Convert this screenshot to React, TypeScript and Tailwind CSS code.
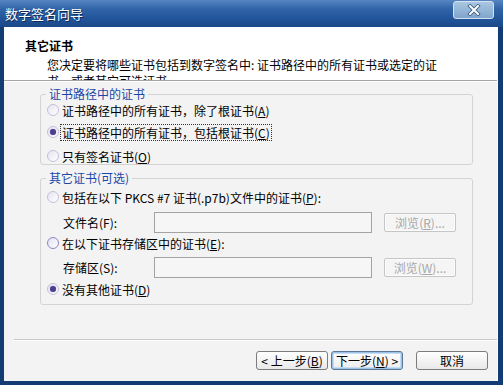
import React from "react";

function Radio({ checked, hover }: { checked?: boolean; hover?: boolean }) {
  return (
    <span
      className={
        hover
          ? "flex items-center justify-center w-[12px] h-[12px] rounded-full border border-[#9184c8] bg-[linear-gradient(135deg,#e3e0f2,#ffffff)] shrink-0"
          : "flex items-center justify-center w-[12px] h-[12px] rounded-full border border-[#c4c0dc] bg-[linear-gradient(135deg,#e6e4f0,#ffffff)] shrink-0"
      }
    >
      {checked && <span className="w-[6px] h-[6px] rounded-full bg-[#4d3f8e] shadow-[0_0_1px_#8a7fc0]" />}
    </span>
  );
}

function M({ c }: { c: string }) {
  return (
    <>
      (<span className="underline">{c}</span>)
    </>
  );
}

function RadioRow({
  children,
  checked,
  hover,
  focus,
  className,
}: {
  children: React.ReactNode;
  checked?: boolean;
  hover?: boolean;
  focus?: boolean;
  className?: string;
}) {
  return (
    <div className={"flex items-center h-[16px] pl-[6px] " + (className ?? "")}>
      <Radio checked={checked} hover={hover} />
      <span
        className={
          focus
            ? "ml-[2px] px-[1px] leading-[15px] outline outline-1 outline-dotted outline-[#333]"
            : "ml-[3px] leading-[15px]"
        }
      >
        {children}
      </span>
    </div>
  );
}

function Browse({ k }: { k: string }) {
  return (
    <div className="ml-[12px] w-[72px] h-[19px] rounded-[2px] border border-[#c6c6c6] bg-[#f5f5f5] flex items-center justify-center text-[#a8a8a8] shadow-[inset_0_0_0_1px_#fbfbfb]">
      浏览<M c={k} />...
    </div>
  );
}

function Btn({ children, def }: { children: React.ReactNode; def?: boolean }) {
  return (
    <div
      className={
        def
          ? "w-[72px] h-[19px] rounded-[3px] border border-[#5b7896] bg-[linear-gradient(#ffffff,#ececec)] shadow-[inset_0_0_0_1px_#9cc2e8,inset_0_0_0_2px_#c4dcf4] flex items-center justify-center text-black"
          : "w-[72px] h-[19px] rounded-[3px] border border-[#7c7c7c] bg-[linear-gradient(#ffffff,#e8e8e8)] flex items-center justify-center text-black"
      }
    >
      {children}
    </div>
  );
}

export default function App() {
  return (
    <div className="w-[503px] h-[385px] flex flex-col bg-[#133c74] font-['Noto_Sans_CJK_SC','Noto_Sans',sans-serif] text-[12px] text-black overflow-hidden">
      {/* Title bar */}
      <div className="h-[27px] shrink-0 flex items-start bg-[linear-gradient(#5685c2,#2f63a6_35%,#22549a_70%,#1a4888)]">
        <div className="mt-[6px] ml-[5px] text-[13px] leading-[16px] text-white [text-shadow:1px_1px_0_#0c2a55]">
          数字签名向导
        </div>
        <div className="ml-auto mr-[9px] mt-[1px] w-[41px] h-[18px] rounded-[3px] border border-[#d3e1f0] bg-[linear-gradient(#a9c6e2,#7fa5cc)] flex items-center justify-center">
          <svg width="14" height="12" viewBox="0 0 14 12">
            <path d="M3 2 L11 10 M11 2 L3 10" stroke="#35577f" strokeWidth="3.6" strokeLinecap="square" />
            <path d="M3 2 L11 10 M11 2 L3 10" stroke="#ffffff" strokeWidth="2" strokeLinecap="square" />
          </svg>
        </div>
      </div>

      {/* Client area */}
      <div className="flex-1 flex flex-col ml-[4px] mr-[5px] mb-[4px] bg-[#f3f3f3] border-r border-[#fbfbfb] min-h-0">
        {/* Header */}
        <div className="h-[53px] shrink-0 bg-white overflow-hidden pl-[21px] pt-[12px]">
          <div className="font-bold leading-[14px]">其它证书</div>
          <div className="mt-[4px] pl-[22px] leading-[16px]">
            您决定要将哪些证书包括到数字签名中: 证书路径中的所有证书或选定的证
            <br />
            书，或者其它可选证书。
          </div>
        </div>
        <div className="h-[1px] shrink-0 bg-[#a6a6a6]" />
        <div className="h-[1px] shrink-0 bg-white" />

        {/* Body */}
        <div className="flex-1 flex flex-col pt-[5px] pl-[36px]">
          <fieldset className="w-[433px] border border-[#d3d3d3] rounded-[3px] pb-[0px]">
            <legend className="ml-[5px] px-[3px] leading-[14px] text-[#1d46a6]">证书路径中的证书</legend>
            <RadioRow className="mt-[1px]">
              证书路径中的所有证书，除了根证书<M c="A" />
            </RadioRow>
            <RadioRow className="mt-[6px]" checked focus>
              证书路径中的所有证书，包括根证书<M c="C" />
            </RadioRow>
            <RadioRow className="mt-[8px]">
              只有签名证书<M c="O" />
            </RadioRow>
          </fieldset>

          <fieldset className="mt-[6px] w-[433px] border border-[#d3d3d3] rounded-[3px] pb-[7px]">
            <legend className="ml-[5px] px-[3px] leading-[14px] text-[#1d46a6]">其它证书(可选)</legend>
            <RadioRow className="mt-[4px]">
              包括在以下 PKCS #7 证书(.p7b)文件中的证书<M c="P" />:
            </RadioRow>
            <div className="mt-[7px] flex items-center pl-[22px] h-[21px]">
              <span className="w-[91px]">
                文件名(F):
              </span>
              <div className="w-[218px] h-[21px] border border-[#a3a3a3] bg-[#f6f6f6]" />
              <Browse k="R" />
            </div>
            <RadioRow className="mt-[2px]" hover>
              在以下证书存储区中的证书<M c="E" />:
            </RadioRow>
            <div className="mt-[6px] flex items-center pl-[22px] h-[21px]">
              <span className="w-[91px]">
                存储区(S):
              </span>
              <div className="w-[218px] h-[21px] border border-[#a3a3a3] bg-[#f6f6f6]" />
              <Browse k="W" />
            </div>
            <RadioRow className="mt-[3px]" checked>
              没有其他证书<M c="D" />
            </RadioRow>
          </fieldset>
        </div>

        {/* Bottom separator */}
        <div className="ml-[10px] h-[1px] shrink-0 bg-[#c8c8c8]" />
        <div className="ml-[10px] h-[1px] shrink-0 bg-white" />

        {/* Footer buttons */}
        <div className="h-[40px] shrink-0 flex items-start justify-end pt-[10px] pr-[9px]">
          <Btn>
            &lt; 上一步<M c="B" />
          </Btn>
          <div className="ml-[3px]">
            <Btn def>
              下一步<M c="N" /> &gt;
            </Btn>
          </div>
          <div className="ml-[13px]">
            <Btn>取消</Btn>
          </div>
        </div>
      </div>
    </div>
  );
}
